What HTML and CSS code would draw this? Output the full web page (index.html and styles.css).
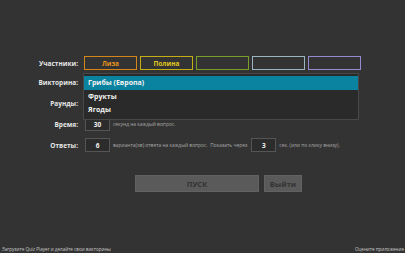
FILE: index.html
```html
<!DOCTYPE html>
<html>
<head>
    <meta charset="utf-8">
    <title>Quiz Player</title>
    <link rel="stylesheet" href="styles.css">
</head>
<body>
    <div class="page">
        <div class="form">
            <div class="row row-players">
                <span class="label">Участники:</span>
                <div class="players">
                    <div class="player p1">Лиза</div>
                    <div class="player p2">Полина</div>
                    <div class="player p3"></div>
                    <div class="player p4"></div>
                    <div class="player p5"></div>
                </div>
            </div>
            <div class="row">
                <span class="label">Викторина:</span>
                <div class="combo">
                    <ul class="dropdown">
                        <li class="sel">Грибы (Европа)</li>
                        <li>Фрукты</li>
                        <li>Ягоды</li>
                    </ul>
                </div>
            </div>
            <div class="row">
                <span class="label">Раунды:</span>
            </div>
            <div class="row">
                <span class="label">Время:</span>
                <div class="num">30</div>
                <span class="hint">секунд на каждый вопрос.</span>
            </div>
            <div class="row">
                <span class="label">Ответы:</span>
                <div class="num">6</div>
                <span class="hint">варианта(ов) ответа на каждый вопрос.&nbsp; Показать через</span>
                <div class="num">3</div>
                <span class="hint">сек. (или по клику внизу).</span>
            </div>
            <div class="buttons">
                <button class="btn btn-start">ПУСК</button>
                <button class="btn btn-exit">Выйти</button>
            </div>
        </div>
        <div class="footer">
            <span>Загрузите Quiz Player и делайте свои викторины</span>
            <span>Оцените приложение</span>
        </div>
    </div>
</body>
</html>
```

FILE: styles.css
```css
html, body{
    margin: 0;
    padding: 0;
    height: 100%;
    background-color: #333;
}
.page{
    height: 253px;
    display: flex;
    flex-direction: column;
    font-family: "Open Sans", "Noto Sans", sans-serif;
    color: #ddd;
}
.form{
    padding-top: 56px;
    display: flex;
    flex-direction: column;
    gap: 7px;
}
.row{
    position: relative;
    height: 14px;
    display: flex;
    align-items: center;
}
.row-players{
    margin-bottom: -2px;
}
.label{
    width: 78px;
    margin-right: 6px;
    text-align: right;
    font-size: 6.5px;
    font-weight: bold;
    color: #e6e6e6;
}
.players{
    display: flex;
    gap: 3px;
}
.player{
    box-sizing: border-box;
    width: 53px;
    height: 14px;
    border: solid 1px;
    display: flex;
    align-items: center;
    justify-content: center;
    font-size: 6.5px;
    font-weight: bold;
}
.p1{ border-color: #d5861a; color: #e8941e; }
.p2{ border-color: #c4ae16; color: #e0c81e; }
.p3{ border-color: #7a9e2a; }
.p4{ border-color: #9ab4c0; }
.p5{ border-color: #978ad0; }
.combo{
    position: relative;
    width: 276px;
    height: 14px;
}
.dropdown{
    position: absolute;
    left: -1px;
    top: -2px;
    width: 276px;
    margin: 0;
    padding: 2px 0 2px 0;
    list-style: none;
    box-sizing: border-box;
    background-color: #2a2a2a;
    border: solid 1px #484848;
    z-index: 2;
}
.dropdown li{
    height: 13.5px;
    line-height: 13.5px;
    padding-left: 4px;
    font-size: 7px;
    font-weight: bold;
    color: #f2f2f2;
}
.dropdown li.sel{
    background-color: #0a83a0;
}
.num{
    box-sizing: border-box;
    width: 25px;
    height: 14px;
    border: solid 1px #555;
    background-color: #2c2c2c;
    display: flex;
    align-items: center;
    justify-content: center;
    font-size: 6.5px;
    font-weight: bold;
    color: #f2f2f2;
    margin-left: 1px;
}
.hint{
    margin: 0 3px;
    font-size: 4.9px;
    color: #a8a8a8;
}
.buttons{
    margin-top: 16px;
    padding-left: 135px;
    display: flex;
    gap: 5px;
}
.btn{
    height: 17px;
    border: solid 1px #626262;
    background-color: #5a5a5a;
    color: #333;
    font-family: "Open Sans", "Noto Sans", sans-serif;
    font-size: 7.5px;
    font-weight: bold;
    padding: 0;
}
.btn-start{
    width: 124px;
}
.btn-exit{
    width: 38px;
}
.footer{
    margin-top: auto;
    padding: 0 1px 1px 2px;
    display: flex;
    justify-content: space-between;
    font-size: 4.6px;
    color: #c8c8c8;
}
```
